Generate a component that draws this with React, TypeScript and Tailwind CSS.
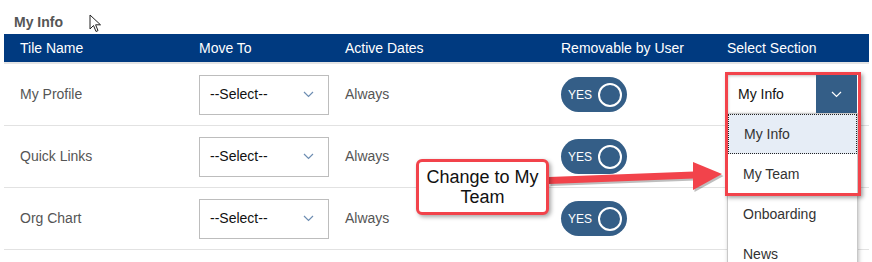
import React from "react";

const rows = ["My Profile", "Quick Links", "Org Chart"];

function Chevron({ color, w = 11 }: { color: string; w?: number }) {
  return (
    <svg width={w} height="7" viewBox="0 0 11 7" fill="none">
      <polyline points="1,1 5.5,5.5 10,1" stroke={color} strokeWidth="1.2" />
    </svg>
  );
}

function Toggle() {
  return (
    <div className="w-[66px] h-[35px] rounded-full bg-[#345e87] flex items-center pl-[7px] pr-[5px] justify-between">
      <span className="text-white text-[12px] leading-none">YES</span>
      <span className="w-[24px] h-[24px] rounded-full border-2 border-white" />
    </div>
  );
}

export default function App() {
  return (
    <div
      className="relative w-[872px] h-[262px] overflow-hidden bg-white"
      style={{ fontFamily: '"Liberation Sans", Arial, sans-serif' }}
    >
      <div className="h-[34px] pt-[14px] pl-[14px] text-[14px] leading-[16px] font-bold text-[#555]">
        My Info
      </div>
      <div className="ml-[4px] w-[865px]">
        <div className="h-[30px] bg-[#003a80] border-b-2 border-[#e4e4e4] flex items-center text-white text-[14px] pl-[16px]">
          <div className="w-[179px]">Tile Name</div>
          <div className="w-[146px]">Move To</div>
          <div className="w-[216px]">Active Dates</div>
          <div className="w-[166px]">Removable by User</div>
          <div>Select Section</div>
        </div>
        {rows.map((r, i) => (
          <div
            key={r}
            className="h-[62px] border-b border-[#e2e2e2] flex items-center text-[14px] text-[#555] pl-[16px]"
          >
            <div className="w-[179px]">{r}</div>
            <div className="w-[146px]">
              <div className="w-[130px] h-[40px] border border-[#bdbdbd] flex items-center justify-between pl-[10px] pr-[14px] text-[#111]">
                <span>--Select--</span>
                <Chevron color="#6d8db2" />
              </div>
            </div>
            <div className="w-[216px]">Always</div>
            <div className="w-[166px]">
              <Toggle />
            </div>
            <div>
              {i === 0 && (
                <div className="w-[130px] h-[38px] flex shadow-[inset_1px_1px_3px_rgba(0,0,0,0.25)] mt-[-1px]">
                  <div className="flex-1 flex items-center pl-[11px] text-[#111]">My Info</div>
                  <div className="w-[41px] bg-[#345e87] flex items-center justify-center">
                    <Chevron color="#ffffff" />
                  </div>
                </div>
              )}
            </div>
          </div>
        ))}
      </div>

      {/* cursor */}
      <svg className="absolute left-[89px] top-[14px]" width="14" height="20" viewBox="0 0 14 20">
        <path
          d="M1 1 L1 15 L4.5 11.5 L7 17.5 L9 16.6 L6.6 10.8 L11.5 10.8 Z"
          fill="#fff"
          stroke="#222"
          strokeWidth="1"
          strokeLinejoin="round"
        />
      </svg>

      {/* dropdown list */}
      <div className="absolute left-[727px] top-[113px] w-[131px] bg-white border border-[#c8c8c8] shadow-[1px_2px_4px_rgba(0,0,0,0.25)] text-[14px] text-[#333]">
        <div className="h-[40px] flex items-center pl-[15px] bg-[#e6edf6] border border-dotted border-[#222]">
          My Info
        </div>
        <div className="h-[40px] flex items-center pl-[15px]">My Team</div>
        <div className="h-[40px] flex items-center pl-[15px]">Onboarding</div>
        <div className="h-[40px] flex items-center pl-[15px]">News</div>
      </div>

      {/* red highlight box */}
      <div className="absolute left-[725px] top-[72px] w-[136px] h-[124px] border-[3px] border-[#f2434b] shadow-[2px_2px_4px_rgba(0,0,0,0.35)]" />

      {/* arrow */}
      <svg className="absolute left-0 top-0" width="872" height="262" viewBox="0 0 872 262">
        <g transform="translate(1.5,2)" opacity="0.25">
          <polygon points="549,177 694,171.5 694,178.5 549,184" fill="#000" />
          <polygon points="693,162 722,174 693,190" fill="#000" />
        </g>
        <polygon points="549,177 694,171.5 694,178.5 549,184" fill="#f2434b" />
        <polygon points="693,162 722,174 693,190" fill="#f2434b" />
      </svg>

      {/* callout */}
      <div className="absolute left-[416px] top-[159px] w-[133px] h-[56px] rounded-[6px] border-[3px] border-[#f2434b] bg-white shadow-[2px_2px_4px_rgba(0,0,0,0.35)] flex items-center justify-center text-center text-[18px] leading-[20px] text-[#111]">
        Change to My
        <br />
        Team
      </div>
    </div>
  );
}
